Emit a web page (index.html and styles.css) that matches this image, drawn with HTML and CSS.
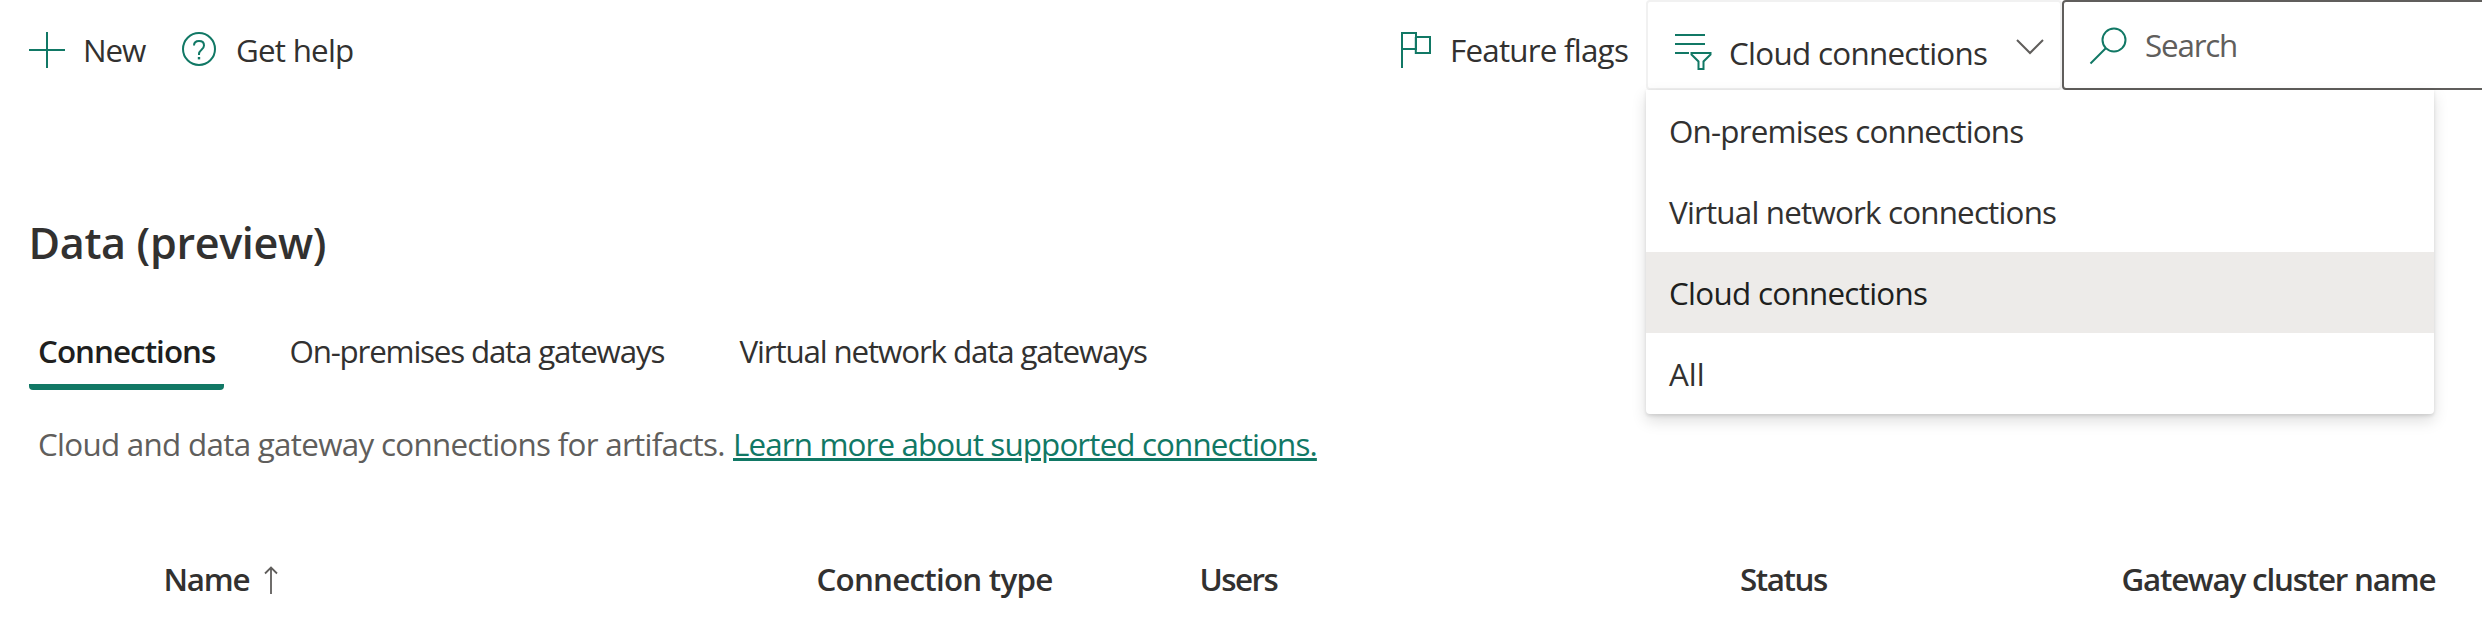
FILE: index.html
```
<!DOCTYPE html>
<html lang="en">
<head>
<meta charset="utf-8">
<title>Data (preview)</title>
<link rel="stylesheet" href="styles.css">
</head>
<body>
<header class="toolbar">
  <div class="command">
    <svg class="icon-plus" width="36" height="36" viewBox="0 0 36 36"><path d="M0 18h36M18 0v36"/></svg>
    <span class="t-new">New</span>
  </div>
  <div class="command">
    <svg class="icon-help" width="34" height="34" viewBox="0 0 34 34"><circle cx="17" cy="17" r="16"/><path d="M12 13.5C12 10.4 14 9 17 9s5 1.700 5 4.400c0 4.200-5 4.300-5 8.600v1"/><path class="dot" d="M15.800 25h2.400v2.400h-2.400z"/></svg>
    <span class="t-help">Get help</span>
  </div>
  <div class="command">
    <svg class="icon-flag" width="30" height="36" viewBox="0 0 30 36"><path d="M1 36V1h14v16H1M15 5h14v16H14.800V5"/></svg>
    <span class="t-flags">Feature flags</span>
  </div>
  <div class="filter">
    <svg class="icon-filter" width="37" height="37" viewBox="0 0 37 37"><path d="M0 2h30M0 11h30M0 20h14M17 20h18.500v1.500l-7 7V36h-5v-7.500l-7-7V20z"/></svg>
    <span class="t-filter">Cloud connections</span>
    <svg class="icon-chevron" width="28" height="16" viewBox="0 0 28 16"><path d="M1 1l13 13L27 1"/></svg>
    <ul class="menu">
      <li class="t-onprem">On-premises connections</li>
      <li class="t-onprem">Virtual network connections</li>
      <li class="t-filter selected">Cloud connections</li>
      <li>All</li>
    </ul>
  </div>
  <div class="search">
    <svg class="icon-search" width="38" height="38" viewBox="0 0 38 38"><circle cx="25" cy="13" r="11.500"/><path d="M17 21L1.500 36.500"/></svg>
    <span class="t-search">Search</span>
  </div>
</header>
<main>
  <h1 class="title">Data (preview)</h1>
  <nav class="tabs">
    <div class="tab active">Connections</div>
    <div class="tab onprem">On-premises data gateways</div>
    <div class="tab virtual">Virtual network data gateways</div>
  </nav>
  <p class="intro"><span class="description">Cloud and data gateway connections for artifacts.</span><a class="link">Learn more about supported connections.</a></p>
  <div class="columns">
    <div class="col-name">Name<svg class="icon-sort" width="14" height="28" viewBox="0 0 14 28"><path d="M7 28V1M1 7.500L7 1.500l6 6"/></svg></div>
    <div class="col-type">Connection type</div>
    <div class="col-users">Users</div>
    <div class="col-status">Status</div>
    <div class="col-gateway">Gateway cluster name</div>
  </div>
</main>
</body>
</html>
```
FILE: styles.css
```
* { box-sizing: border-box; }
body {
  margin: 0;
  height: 622px;
  overflow: hidden;
  background: #fff;
  color: #323130;
  font-family: "Open Sans", "Noto Sans", sans-serif;
  font-size: 31.36px;
  line-height: 40px;
  white-space: nowrap;
}
svg { display: block; flex: none; fill: none; stroke: #117865; stroke-width: 2; }

.toolbar {
  display: grid;
  grid-template-columns: 153px 1219px 245px 416px 1fr;
  height: 90px;
  padding-left: 29px;
}
.command { display: flex; align-items: flex-start; padding-top: 30px; }
.command svg { margin-top: 2px; }
.icon-plus { margin-right: 18px; }
.icon-help { margin-right: 20px; }
.icon-help .dot { fill: #117865; stroke: none; }
.icon-flag { margin-right: 19px; }
.t-new { letter-spacing: -1.1px; }
.t-help, .t-flags { letter-spacing: -0.77px; }
.t-filter { letter-spacing: -0.7px; }
.t-onprem { letter-spacing: -0.81px; }
.t-search { letter-spacing: -1.2px; }

.filter {
  position: relative;
  display: flex;
  align-items: flex-start;
  padding: 31px 0 0 27px;
  border: 2px solid #f1f1f1;
  border-radius: 4px;
}
.icon-filter { margin: 0 17px 0 0; }
.filter > .t-filter { width: 287px; }
.icon-chevron { margin-top: 6px; stroke: #605e5c; }

.menu {
  position: absolute;
  z-index: 2;
  top: 88px;
  left: -2px;
  width: 788px;
  margin: 0;
  padding: 0;
  list-style: none;
  background: #fff;
  border-radius: 0 0 4px 4px;
  box-shadow: 0 6.4px 14.4px rgba(0, 0, 0, .132), 0 1.2px 3.6px rgba(0, 0, 0, .108);
}
.menu li { height: 81px; padding-left: 23px; line-height: 81px; }
.menu .selected { background: #edebe9; color: #201f1e; }

.search {
  display: flex;
  align-items: flex-start;
  padding: 23px 0 0 25px;
  margin-right: -8px;
  border: 2px solid #605e5c;
  border-radius: 4px;
  color: #605e5c;
}
.icon-search { margin: 2px 18px 0 0; }

.title {
  margin: 0;
  padding: 123px 0 0 28.5px;
  font-size: 43.12px;
  font-weight: 600;
  line-height: 60px;
  letter-spacing: -0.35px;
}
.tabs { display: flex; height: 60px; margin: 57px 0 0 29px; line-height: 42px; }
.tab.active {
  width: 195px;
  margin-right: 65.5px;
  padding-left: 9px;
  border-bottom: 6px solid #117865;
  border-radius: 0 0 4px 4px;
  color: #201f1e;
  font-weight: 600;
  letter-spacing: -0.97px;
}
.tab.onprem { width: 450px; letter-spacing: -1.21px; }
.tab.virtual { letter-spacing: -1.16px; }

.intro { display: flex; margin: 34px 0 0 38px; color: #605e5c; }
.description { width: 695px; letter-spacing: -0.71px; }
.link {
  color: #117865;
  letter-spacing: -0.87px;
  text-decoration: underline;
  text-decoration-thickness: 3px;
  text-underline-offset: 2px;
}

.columns {
  display: grid;
  grid-template-columns: 653px 383px 540.5px 381.5px 1fr;
  padding: 95px 0 0 163.500px;
  font-weight: 600;
  letter-spacing: -1.2px;
}
.col-name { display: flex; }
.icon-sort { margin: 7px 0 0 15px; stroke: #605e5c; stroke-width: 1.800; }
.col-type { letter-spacing: -0.78px; }
.col-users { letter-spacing: -1.54px; }
.col-status { letter-spacing: -1.43px; }
```
